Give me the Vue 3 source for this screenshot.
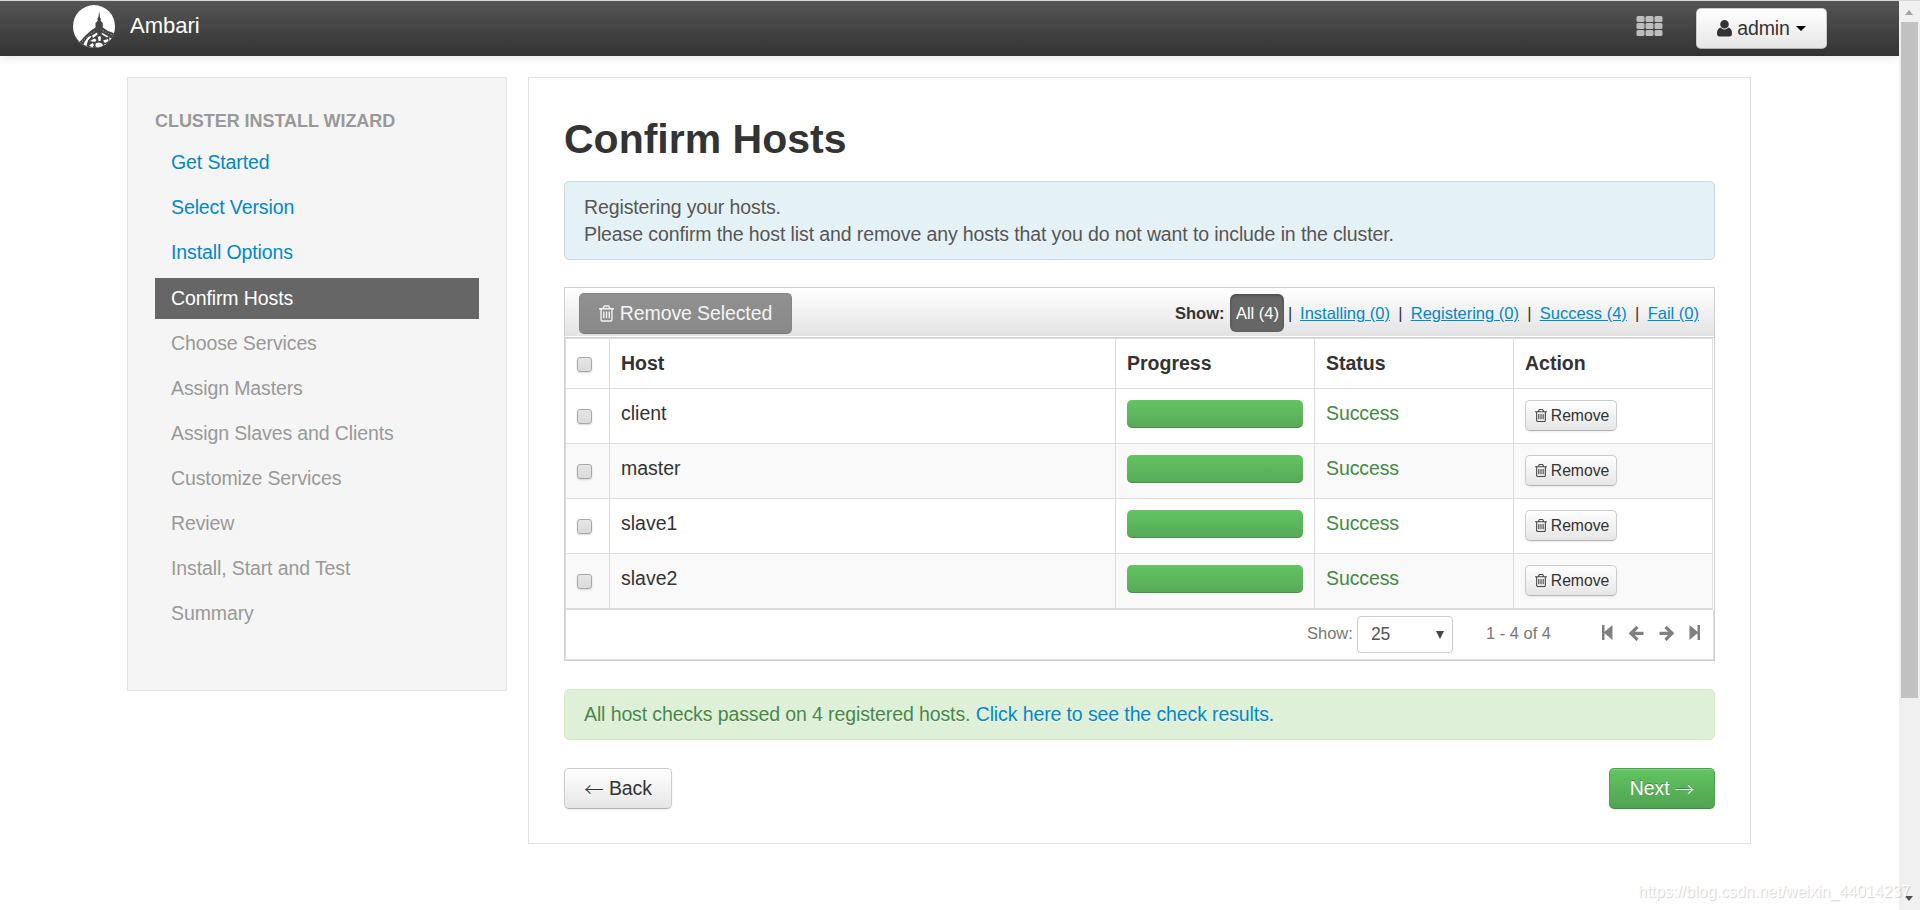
<script setup>
const steps = [
  { label: 'Get Started', state: 'done' },
  { label: 'Select Version', state: 'done' },
  { label: 'Install Options', state: 'done' },
  { label: 'Confirm Hosts', state: 'active' },
  { label: 'Choose Services', state: 'todo' },
  { label: 'Assign Masters', state: 'todo' },
  { label: 'Assign Slaves and Clients', state: 'todo' },
  { label: 'Customize Services', state: 'todo' },
  { label: 'Review', state: 'todo' },
  { label: 'Install, Start and Test', state: 'todo' },
  { label: 'Summary', state: 'todo' },
]
const hosts = ['client', 'master', 'slave1', 'slave2']
const filters = ['Installing (0)', 'Registering (0)', 'Success (4)', 'Fail (0)']
const trash =
  'M704 736v576q0 14-9 23t-23 9h-64q-14 0-23-9t-9-23v-576q0-14 9-23t23-9h64q14 0 23 9t9 23zm256 0v576q0 14-9 23t-23 9h-64q-14 0-23-9t-9-23v-576q0-14 9-23t23-9h64q14 0 23 9t9 23zm256 0v576q0 14-9 23t-23 9h-64q-14 0-23-9t-9-23v-576q0-14 9-23t23-9h64q14 0 23 9t9 23zm128 724v-948h-896v948q0 22 7 40.5t14.5 27 10.5 8.5h832q3 0 10.5-8.5t14.5-27 7-40.5zm-672-1076h448l-48-117q-7-9-17-11h-317q-10 2-17 11zm928 32v64q0 14-9 23t-23 9h-96v948q0 83-47 143.5t-113 60.5h-832q-66 0-113-58.5t-47-141.5v-952h-96q-14 0-23-9t-9-23v-64q0-14 9-23t23-9h309l70-167q15-37 54-63t79-26h320q40 0 79 26t54 63l70 167h309q14 0 23 9t9 23z'
</script>

<template>
  <div class="screen">
    <div class="page">
      <header class="navbar">
        <svg class="logo" viewBox="0 0 42 43" width="42" height="43">
          <defs>
            <clipPath id="disc"><ellipse cx="21" cy="21.5" rx="21" ry="21.5" /></clipPath>
          </defs>
          <g clip-path="url(#disc)">
            <rect width="42" height="43" fill="#fff" />
            <path d="M26.200 6l.8 6.500.8 1v2.500l2 2v4.500L35 26l7 2.500V43H10L5.500 38 13 30l5.500-5 4-2.500V18l2-2v-2.500l.8-1z" fill="#444" />
            <path d="M9 36.500L17 29l6-3.500M29.500 25.500l6 3 6 2.500" fill="none" stroke="#a8a8a8" stroke-width="1" stroke-dasharray="1.200 1.800" />
            <path d="M10.500 39.500Q13 33 17 31l1.500.5L15 35.500l-1.500 5.500zM19 30.500l5-3 .5 2L20 33zM28.500 27.500l7 4-1.500 1-5-3zM36 32.500l5 1.500-2 5-2-1.500zM17 36l4.500-2.500 2 1.500-1.500 2zM30 35.500l5-1.500.5 2-3.500 2zM25 32l1.500-1L28 32l-.5 4h-2zM22.500 38.500l3-1 3.500 1 1 2-3.500 2.500-4-1.500zM16 40.500l3.500-2.500 1.500 2-1.500 2.500zM31.500 39l4 .5-2.500 2-2-1z" fill="#fff" />
          </g>
        </svg>
        <span class="brand">Ambari</span>
        <svg class="apps" viewBox="0 0 27 21" width="27" height="21">
          <g fill="#bdbdbd">
            <template v-for="r in 3" :key="r">
              <rect v-for="c in 3" :key="c" :x="(c - 1) * 9 + 0.5" :y="(r - 1) * 7" width="8" height="6" rx="1.5" />
            </template>
          </g>
        </svg>
        <button class="btn user">
          <svg viewBox="0 0 15 17" width="15" height="17"><path fill="#333" d="M7.500 0a4.300 4.300 0 0 1 0 8.600a4.300 4.300 0 0 1 0-8.600zM3.600 7.500q1.600 2 3.900 2t3.900-2Q15 8.300 15 13.500q0 3-2.600 3H2.600Q0 16.500 0 13.500 0 8.300 3.600 7.500z" /></svg>
          <span>admin</span>
          <i class="caret"></i>
        </button>
      </header>

      <main class="layout">
        <aside class="sidebar">
          <div class="side-title">CLUSTER INSTALL WIZARD</div>
          <a v-for="s in steps" :key="s.label" class="step" :class="s.state">{{ s.label }}</a>
        </aside>

        <section class="content">
          <h2>Confirm Hosts</h2>
          <div class="alert info">Registering your hosts.<br />Please confirm the host list and remove any hosts that you do not want to include in the cluster.</div>

          <div class="box">
            <div class="toolbar">
              <button class="remove-selected">
                <svg viewBox="192 128 1408 1536" width="15" height="17"><path :d="trash" fill="#f4f4f4" /></svg>
                <span>Remove Selected</span>
              </button>
              <div class="filters">
                <b>Show:</b>
                <span class="all">All (4)</span>
                <template v-for="f in filters" :key="f"><span class="pipe">|</span><a>{{ f }}</a></template>
              </div>
            </div>

            <div class="table">
              <div class="row head">
                <div><i class="check"></i></div>
                <div>Host</div>
                <div>Progress</div>
                <div>Status</div>
                <div>Action</div>
              </div>
              <div v-for="h in hosts" :key="h" class="row host">
                <div><i class="check"></i></div>
                <div>{{ h }}</div>
                <div><div class="progress"></div></div>
                <div class="success">Success</div>
                <div>
                  <button class="btn small">
                    <svg viewBox="192 128 1408 1536" width="12" height="13"><path :d="trash" fill="#444" /></svg>
                    <span>Remove</span>
                  </button>
                </div>
              </div>
            </div>

            <div class="footer">
              <span>Show:</span>
              <div class="select"><span>25</span><i></i></div>
              <span class="range">1 - 4 of 4</span>
              <svg class="pager" viewBox="0 0 98 16" width="98" height="16">
                <g fill="#808080">
                  <path d="M0 0h2.500v6.800L10.500 0v15L2.500 8.200V15H0z" />
                  <path d="M98 0h-2.500v6.800L87.500 0v15l8-6.800V15H98z" />
                </g>
                <g fill="none" stroke="#808080" stroke-width="3.300">
                  <path d="M35.500 1.800L29 8.300l6.500 6.500M29.500 8.300H41.500" />
                  <path d="M63.500 1.800L70 8.300l-6.500 6.500M69.500 8.300H57.500" />
                </g>
              </svg>
            </div>
          </div>

          <div class="alert ok">All host checks passed on 4 registered hosts. <a>Click here to see the check results.</a></div>

          <div class="actions">
            <button class="btn back"><span class="arrow">←</span>&nbsp;Back</button>
            <button class="btn next">Next&nbsp;<span class="arrow">→</span></button>
          </div>
        </section>
      </main>
    </div>

    <div class="scrollbar">
      <i class="up"></i>
      <div class="thumb"></div>
      <i class="down"></i>
    </div>
    <div class="watermark">https://blog.csdn.net/weixin_44014237</div>
  </div>
</template>

<style>
body { margin: 0; background: #fff; overflow: hidden; }
</style>

<style scoped>
* { box-sizing: border-box; }
.screen {
  position: relative;
  display: flex;
  width: 1920px;
  height: 910px;
  overflow: hidden;
  border-top: 1px solid #d5d8d6;
  background: #fff;
  color: #333;
  font: 19.5px/27px "Liberation Sans", Arial, sans-serif;
}
.page { width: 1899px; }
.navbar {
  display: flex;
  align-items: flex-start;
  height: 55px;
  padding-left: 73px;
  background: linear-gradient(#555, #333);
  box-shadow: 0 1px 10px rgba(0, 0, 0, 0.12);
}
.logo { margin-top: 4px; }
.brand { margin: 10px 0 0 15px; width: 1506px; font-size: 22px; color: #fff; line-height: 30px; }
.apps { margin-top: 15px; }
button { font: inherit; margin: 0; padding: 0; cursor: pointer; white-space: nowrap; }
.btn {
  display: flex;
  align-items: center;
  justify-content: center;
  color: #333;
  border: 1px solid #ccc;
  border-bottom-color: #b3b3b3;
  border-radius: 5px;
  background: linear-gradient(#fff, #e6e6e6);
  box-shadow: inset 0 1px 0 rgba(255, 255, 255, 0.2), 0 1px 2px rgba(0, 0, 0, 0.08);
}
.user { width: 131px; height: 41px; margin: 7px 0 0 33px; letter-spacing: -0.1px; }
.user span { margin: 0 6px 0 5px; }
.caret { border: 5.5px solid transparent; border-top: 5.5px solid #000; border-bottom: 0; }

.layout { display: flex; align-items: flex-start; gap: 21px; padding: 21px 0 0 127px; }
.sidebar { width: 380px; height: 614px; padding: 28px 27px 0; border: 1px solid #e3e3e3; background: #f5f5f5; }
.side-title { height: 36px; font-size: 18px; font-weight: bold; line-height: 30px; color: #999; letter-spacing: -0.05px; }
.step { display: block; height: 41px; margin-bottom: 4px; padding: 7px 16px; color: #999; letter-spacing: -0.11px; }
.done { color: #08c; }
.active { margin-top: 5px; background: #666; color: #fff; }

.content { width: 1223px; height: 767px; padding: 31px 35px 0; border: 1px solid #e3e3e3; background: #fff; }
h2 { margin: 0 0 12px; height: 60px; line-height: 60px; font-size: 41px; }
.alert { padding: 0 19px; border: 1px solid; border-radius: 5px; letter-spacing: -0.11px; text-shadow: 0 1px 0 rgba(255, 255, 255, 0.5); }
.info { height: 79px; padding-top: 12px; border-color: #c9d9dd; background: #e4f1f6; color: #555; }
.ok { height: 51px; margin-top: 28px; padding-top: 11px; border-color: #d6e9c6; background: #dff0d8; color: #468847; }
.ok a { color: #08c; }

.box { height: 374px; margin-top: 27px; border: 1px solid #d0d0d0; }
.toolbar {
  display: flex;
  justify-content: space-between;
  height: 50px;
  padding: 5px 15px 0 14px;
  border-bottom: 1px solid #d0d0d0;
  background: linear-gradient(#fff, #e3e3e3 48px, #fff 48px);
}
.remove-selected {
  display: flex;
  align-items: center;
  justify-content: center;
  gap: 6px;
  width: 213px;
  height: 41px;
  border: 1px solid #858585;
  border-bottom-color: #787878;
  border-radius: 5px;
  background: linear-gradient(#919191, #888);
  color: #f4f4f4;
  letter-spacing: -0.11px;
}
.filters { display: flex; height: 38px; margin-top: 1px; line-height: 38px; font-size: 16.5px; }
.filters .all { width: 54px; margin-left: 6px; border-radius: 6px; background: #666; box-shadow: inset 0 1px 3px rgba(0, 0, 0, 0.35); color: #fff; text-align: center; }
.filters a { color: #08c; text-decoration: underline; }
.pipe { width: 20.8px; text-align: center; }
.all + .pipe { width: 15.600px; padding-right: 4px; }

.table { width: 1148px; border: 1px solid #ddd; border-width: 1px 1px 1px 0; }
.row { display: grid; grid-template-columns: 44px 506px 199px 199px 199px; height: 55px; border-bottom: 1px solid #ddd; }
.row > div { border-left: 1px solid #ddd; padding: 11px 11px 0; }
.head { height: 50px; font-weight: bold; }
.host:nth-child(odd) { background: #f9f9f9; }
.check {
  display: block;
  width: 15px;
  height: 15px;
  margin-top: 7px;
  border: 1.5px solid #a8a8a8;
  border-radius: 3px;
  background: linear-gradient(#e6e6e6, #dadada);
  box-shadow: 0 1px 2px rgba(0, 0, 0, 0.15);
}
.host .check { margin-top: 9px; }
.progress {
  width: 176px;
  height: 28px;
  border-radius: 5px;
  background: linear-gradient(#62c462, #57a957);
  box-shadow: inset 0 -1px 0 rgba(0, 0, 0, 0.15);
}
.row .success { color: #468847; letter-spacing: -0.11px; }
.btn.small { width: 92px; height: 31px; gap: 4px; padding-left: 2px; font-size: 15.75px; letter-spacing: -0.05px; }

.footer {
  display: flex;
  align-items: flex-start;
  width: 1149px;
  height: 50px;
  padding: 6px 13px 0 0;
  justify-content: flex-end;
  border: 1px solid #ddd;
  border-width: 0 1px 1px 1px;
  color: #777;
  font-size: 16.5px;
  line-height: 35px;
}
.select {
  display: flex;
  align-items: center;
  justify-content: space-between;
  width: 96px;
  height: 37px;
  margin-left: 4px;
  padding: 0 8px 0 13px;
  border: 1px solid #ccc;
  border-radius: 4px;
  font-size: 17.5px;
  color: #555;
}
.select i { border: 4.5px solid transparent; border-top: 8px solid #444; border-bottom: 0; }
.range { margin: 0 51px 0 33px; }
.pager { margin-top: 9px; }

.actions { display: flex; justify-content: space-between; margin-top: 28px; }
.actions .btn { height: 41px; letter-spacing: -0.1px; }
.back { width: 108px; }
.next {
  width: 106px;
  border-color: #4fa04f #4fa04f #3f8b3f;
  background: linear-gradient(#62c462, #51a351);
  color: #fff;
  text-shadow: 0 -1px 0 rgba(0, 0, 0, 0.25);
}
.arrow { font-family: "Noto Sans CJK SC", sans-serif; font-weight: 300; line-height: 27px; }

.scrollbar { position: relative; width: 21px; background: #f0f0f0; padding-top: 21px; }
.thumb { width: 17px; height: 676px; margin-left: 2px; background: #c1c1c1; }
.up, .down { position: absolute; left: 6px; border: 4.5px solid transparent; }
.up { top: 9px; border-top: 0; border-bottom: 5px solid #a3a3a3; }
.down { top: 895px; border-bottom: 0; border-top: 5px solid #505050; }
.watermark {
  position: absolute;
  left: 1638px;
  top: 877px;
  font-size: 16px;
  color: rgba(255, 255, 255, 0.9);
  text-shadow: 1px 1px 1px rgba(0, 0, 0, 0.18);
}
</style>
